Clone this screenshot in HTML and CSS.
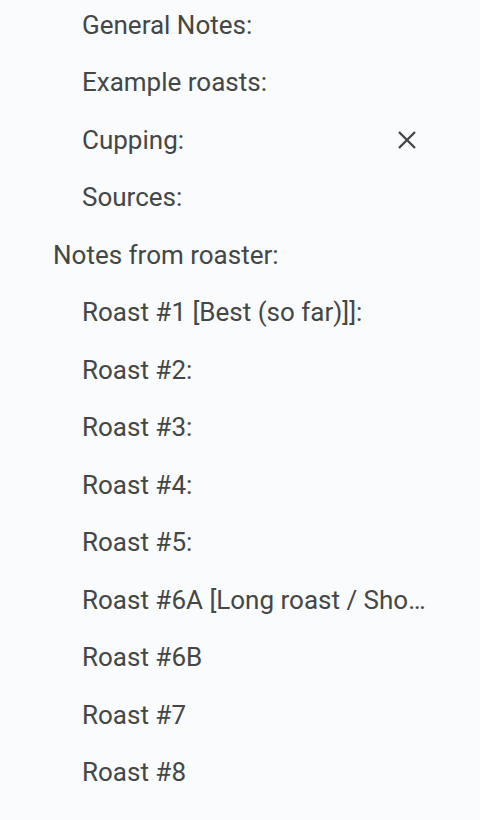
FILE: index.html
```html
<!DOCTYPE html>
<html lang="en">
  <head>
    <meta charset="UTF-8" />
    <title>Document outline</title>
    <link rel="stylesheet" href="styles.css">
  </head>
  <body>
    <ul class="outline">
      <li class="item level-2"><span class="label">General Notes:</span></li>
      <li class="item level-2"><span class="label">Example roasts:</span></li>
      <li class="item level-2 hover">
        <span class="label">Cupping:</span>
        <button class="remove-btn" title="Remove from outline">
          <svg width="20" height="20" viewBox="0 0 20 20">
            <path d="M2 2 L18 18 M18 2 L2 18" stroke="#444746" stroke-width="2.4" fill="none" />
          </svg>
        </button>
      </li>
      <li class="item level-2"><span class="label">Sources:</span></li>
      <li class="item level-1"><span class="label">Notes from roaster:</span></li>
      <li class="item level-2"><span class="label">Roast #1 [Best (so far)]]:</span></li>
      <li class="item level-2"><span class="label">Roast #2:</span></li>
      <li class="item level-2"><span class="label">Roast #3:</span></li>
      <li class="item level-2"><span class="label">Roast #4:</span></li>
      <li class="item level-2"><span class="label">Roast #5:</span></li>
      <li class="item level-2"><span class="label">Roast #6A [Long roast / Sho…</span></li>
      <li class="item level-2"><span class="label">Roast #6B</span></li>
      <li class="item level-2"><span class="label">Roast #7</span></li>
      <li class="item level-2"><span class="label">Roast #8</span></li>
    </ul>
  </body>
</html>
```

FILE: styles.css
```css
body {
  margin: 0;
  background: #f9fbfd;
  font-family: Roboto, "Noto Sans", sans-serif;
  color: #444746;
  overflow: hidden;
}
.outline {
  list-style: none;
  margin: -4px 0 0 0;
  padding: 0;
}
.item {
  display: flex;
  align-items: center;
  height: 57.5px;
  padding-right: 50px;
  font-size: 26px;
}
.level-1 {
  padding-left: 53px;
}
.level-2 {
  padding-left: 82px;
}
.label {
  flex: 1;
  min-width: 0;
  white-space: nowrap;
  overflow: hidden;
}
.remove-btn {
  display: flex;
  align-items: center;
  justify-content: center;
  width: 40px;
  height: 40px;
  margin-right: 3px;
  padding: 0;
  border: none;
  background: none;
  cursor: pointer;
}
```
